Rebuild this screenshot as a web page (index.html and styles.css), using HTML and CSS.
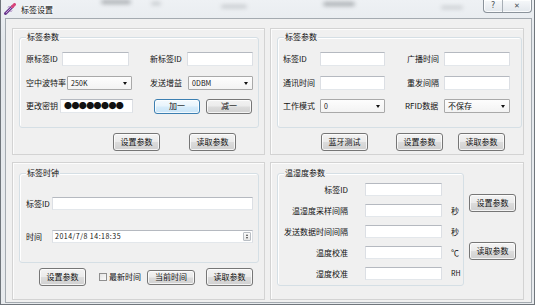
FILE: index.html
```html
<!DOCTYPE html>
<html lang="zh">
<head>
<meta charset="utf-8">
<link rel="stylesheet" href="styles.css">
</head>
<body>
<div class="window">
  <div class="titlebar">
    <span class="blob b1"></span>
    <span class="blob b2"></span>
    <span class="blob b3"></span>
    <span class="blob b4"></span>
    <span class="blob b5"></span>
    <svg class="appicon" width="12" height="12" viewBox="0 0 12 12">
      <path d="M1.5 10.5 L8.5 3.5" stroke="#6a3a8e" stroke-width="3" stroke-linecap="round"/>
      <path d="M2 10 L8 4" stroke="#c89ad8" stroke-width="1"/>
      <path d="M8.5 3.5 L10.5 1.5" stroke="#d8457a" stroke-width="3" stroke-linecap="round"/>
      <path d="M4 4.5 L5.5 3 M6.5 9 L8 7.5" stroke="#9b6bb8" stroke-width="1"/>
    </svg>
    <span class="title">标签设置</span>
    <div class="capbtns">
      <span class="capbtn help">?</span>
      <span class="capbtn close">✕</span>
    </div>
  </div>

  <div class="client">
    <!-- top left -->
    <div class="panel p-top-left">
      <div class="group g-top-left">
        <span class="legend">标签参数</span>
        <div class="row">
          <div class="c1">
            <span class="lbl w36">原标签ID</span><span class="input w67"></span>
          </div>
          <div class="c2">
            <span class="lbl w37">新标签ID</span><span class="input w66"></span>
          </div>
        </div>
        <div class="row r2">
          <div class="c1">
            <span class="lbl w41">空中波特率</span><span class="select w65"><span class="val">250K</span><span class="arrow"></span></span>
          </div>
          <div class="c2">
            <span class="lbl w38">发送增益</span><span class="select w65"><span class="val">0DBM</span><span class="arrow"></span></span>
          </div>
        </div>
        <div class="row r3">
          <div class="c1">
            <span class="lbl w34">更改密钥</span><span class="input pwd w73">●●●●●●●●</span>
          </div>
          <div class="c2 c2-btns">
            <span class="btn focus">加一</span><span class="btn">减一</span>
          </div>
        </div>
      </div>
      <div class="btnrow tl-btns">
        <span class="btn">设置参数</span><span class="btn">读取参数</span>
      </div>
    </div>

    <!-- top right -->
    <div class="panel p-top-right">
      <div class="group g-top-right">
        <span class="legend">标签参数</span>
        <div class="row">
          <span class="lbl w37">标签ID</span><span class="input w65"></span>
          <span class="lbl w37 col2">广播时间</span><span class="input w66"></span>
        </div>
        <div class="row r2">
          <span class="lbl w37">通讯时间</span><span class="input w65"></span>
          <span class="lbl w37 col2">重发间隔</span><span class="input w66"></span>
        </div>
        <div class="row r3">
          <span class="lbl w37">工作模式</span><span class="select w65"><span class="val">0</span><span class="arrow"></span></span>
          <span class="lbl w39 col2b">RFID数据</span><span class="select w66"><span class="val cjk">不保存</span><span class="arrow"></span></span>
        </div>
      </div>
      <div class="btnrow tr-btns">
        <span class="btn">蓝牙测试</span><span class="btn">设置参数</span><span class="btn">读取参数</span>
      </div>
    </div>

    <!-- bottom left -->
    <div class="panel p-bot-left">
      <div class="group g-bot-left">
        <span class="legend">标签时钟</span>
        <div class="row rb1">
          <span class="lbl w26">标签ID</span><span class="input w201 h13"></span>
        </div>
        <div class="row rb2">
          <span class="lbl w26">时间</span>
          <span class="input w201 h13 dt"><span class="val">2014/7/8 14:18:35</span><span class="spin"><span class="up"></span><span class="dn"></span></span></span>
        </div>
      </div>
      <div class="btnrow bl-btns">
        <span class="btn">设置参数</span>
        <span class="check"></span><span class="checklbl">最新时间</span>
        <span class="btn small">当前时间</span>
        <span class="btn">读取参数</span>
      </div>
    </div>

    <!-- bottom right -->
    <div class="panel p-bot-right">
      <div class="group g-bot-right">
        <span class="legend">温湿度参数</span>
        <div class="trow"><span class="tlbl">标签ID</span><span class="input w77 h13"></span><span class="unit"></span></div>
        <div class="trow"><span class="tlbl">温湿度采样间隔</span><span class="input w77 h13"></span><span class="unit">秒</span></div>
        <div class="trow"><span class="tlbl">发送数据时间间隔</span><span class="input w77 h13"></span><span class="unit">秒</span></div>
        <div class="trow"><span class="tlbl">温度校准</span><span class="input w77 h13"></span><span class="unit">℃</span></div>
        <div class="trow"><span class="tlbl">湿度校准</span><span class="input w77 h13"></span><span class="unit lat">RH</span></div>
      </div>
      <div class="btncol">
        <span class="btn">设置参数</span>
        <span class="btn second">读取参数</span>
      </div>
    </div>
  </div>
</div>
</body>
</html>
```

FILE: styles.css
```css
* { box-sizing: border-box; margin: 0; padding: 0; }
html, body { width: 535px; height: 305px; overflow: hidden; }
body {
  font-family: "Noto Sans CJK SC", "Noto Sans", sans-serif;
  font-size: 8px;
  line-height: 1;
  color: #111;
  background: #dfe4e9;
}

.window {
  position: relative;
  width: 535px;
  height: 305px;
  display: flex;
  flex-direction: column;
  background: linear-gradient(#eef1f4, #e4e8ec 40px, #e8ebee);
  border: 1px solid #70767c;
  border-top: none;
}

/* title bar */
.titlebar {
  position: relative;
  height: 18px;
  display: flex;
  align-items: center;
  padding-left: 3px;
  flex-shrink: 0;
}
.appicon { display: block; margin-right: 5px; position: relative; z-index: 1; }
.title {
  font-size: 8px;
  color: #111;
  text-shadow: 0 0 3px #fff, 0 0 5px #fff;
  position: relative;
  z-index: 1;
  margin-top: 1px;
}
.blob {
  position: absolute;
  background: #6c7176;
  filter: blur(2px);
  opacity: .55;
  border-radius: 3px;
}
.b1 { left: 100px; top: 0; width: 30px; height: 4px; }
.b2 { left: 150px; top: 2px; width: 10px; height: 3px; opacity: .35; }
.b3 { left: 220px; top: 5px; width: 26px; height: 3px; opacity: .35; }
.b4 { left: 322px; top: 2px; width: 32px; height: 4px; }
.b5 { left: 440px; top: 6px; width: 22px; height: 3px; opacity: .3; }

.capbtns {
  position: absolute;
  top: 0;
  right: 2px;
  display: flex;
  height: 13px;
  border: 1px solid #8b939b;
  border-top: none;
  border-radius: 0 0 4px 4px;
  background: linear-gradient(#f6f8fa, #e2e7ec);
  box-shadow: inset 0 0 0 1px rgba(255,255,255,.8);
}
.capbtn {
  display: flex;
  align-items: center;
  justify-content: center;
  color: #4a4f55;
  font-family: "DejaVu Sans", sans-serif;
  font-size: 8px;
}
.help { width: 19px; border-right: 1px solid #a7aeb5; }
.close { width: 28px; font-size: 7px; }

/* client */
.client {
  margin: 0 2px 1px 4px;
  height: 285px;
  border: 1px solid #a4aab0;
  background: #f0f0f0;
  padding: 9px 0 0 6px;
  display: grid;
  grid-template-columns: 253px 254px;
  grid-template-rows: 127px 138px;
  column-gap: 5px;
  row-gap: 7px;
}

.panel {
  border: 1px solid #d3d3d3;
  box-shadow: inset 1px 1px 0 #fcfcfc;
  background: #f0f0f0;
}

.group {
  position: relative;
  border: 1px solid #d5dfe5;
  border-radius: 3px;
  box-shadow: inset 1px 1px 0 #fff;
}
.legend {
  position: absolute;
  top: -5px;
  left: 6px;
  padding: 0 1px;
  background: #f0f0f0;
  color: #111;
}

.row { display: flex; align-items: center; height: 14px; }
.r2 { margin-top: 10px; }
.r3 { margin-top: 9px; }

.lbl { display: block; white-space: nowrap; flex-shrink: 0; }
.w26 { width: 26px; }
.w34 { width: 34px; }
.w36 { width: 36px; }
.w37 { width: 37px; }
.w38 { width: 38px; }
.w39 { width: 39px; }
.w41 { width: 41px; }

.input {
  display: block;
  height: 14px;
  background: #fff;
  border: 1px solid;
  border-color: #b5b9c0 #dcdfe4 #e3e7eb #dcdfe4;
  flex-shrink: 0;
}
.h13 { height: 13px; }
.w65 { width: 65px; }
.w66 { width: 66px; }
.w67 { width: 67px; }
.w73 { width: 73px; }
.w77 { width: 77px; }
.w201 { width: 201px; }

.pwd {
  font-size: 8px;
  line-height: 12px;
  padding-left: 3px;
  letter-spacing: -0.6px;
  color: #111;
  overflow: hidden;
  white-space: nowrap;
}

.select {
  display: flex;
  align-items: center;
  justify-content: space-between;
  height: 14px;
  padding: 0 4px 0 3px;
  background: linear-gradient(#fdfdfd, #f3f3f3);
  border: 1px solid #a9a9a9;
  border-radius: 1px;
  flex-shrink: 0;
}
.val {
  font-size: 7px;
  letter-spacing: 0.1px;
  color: #111;
}
.val.cjk { font-size: 8px; letter-spacing: 0; }
.arrow {
  width: 0; height: 0;
  border-left: 2.5px solid transparent;
  border-right: 2.5px solid transparent;
  border-top: 3px solid #111;
}

/* buttons */
.btn {
  display: flex;
  align-items: center;
  justify-content: center;
  width: 47px;
  height: 18px;
  border: 1px solid #767676;
  border-radius: 3px;
  background: linear-gradient(#f3f3f3 0%, #ebebeb 48%, #dcdcdc 52%, #d0d0d0 100%);
  box-shadow: inset 0 0 0 1px rgba(255,255,255,.75);
  color: #111;
  flex-shrink: 0;
}
.btn.focus {
  border-color: #3c7fb1;
  background: linear-gradient(#f4fafe 0%, #e8f4fc 48%, #d7ecfa 52%, #c8e4f8 100%);
}
.btnrow { display: flex; align-items: center; }

/* top-left */
.p-top-left { padding: 8px 5px 0 6px; }
.g-top-left { height: 91px; padding: 14px 0 0 6px; }
.c1 { width: 124px; display: flex; align-items: center; }
.c2 { display: flex; align-items: center; }
.c2-btns { padding-left: 4px; gap: 6px; }
.c2-btns .btn { width: 46px; height: 15px; }
.tl-btns { margin-top: 5px; padding-left: 94px; gap: 29px; }

/* top-right */
.p-top-right { padding: 8px 0 0 6px; }
.g-top-right { width: 245px; height: 91px; padding: 14px 0 0 5px; }
.col2 { margin-left: 22px; }
.col2b { margin-left: 20px; }
.tr-btns { margin-top: 5px; padding-left: 44px; }
.tr-btns .btn:nth-child(2) { margin-left: 28px; }
.tr-btns .btn:nth-child(3) { margin-left: 15px; }

/* bottom-left */
.p-bot-left { padding: 10px 5px 0 6px; }
.g-bot-left { height: 90px; padding: 23px 0 0 6px; }
.rb1, .rb2 { height: 13px; }
.rb2 { margin-top: 20px; }
.dt {
  display: flex;
  align-items: center;
  justify-content: space-between;
  padding: 0 1px 0 2px;
}
.dt .val { letter-spacing: 0.5px; }
.spin {
  width: 8px;
  height: 9px;
  border: 1px solid #b9bec4;
  border-radius: 1px;
  background: linear-gradient(#fafafa, #e6e6e6);
  display: flex;
  flex-direction: column;
  align-items: center;
  justify-content: space-around;
}
.spin .up, .spin .dn {
  width: 0; height: 0;
  border-left: 1.5px solid transparent;
  border-right: 1.5px solid transparent;
}
.spin .up { border-bottom: 2px solid #444; }
.spin .dn { border-top: 2px solid #444; }
.bl-btns { margin-top: 5px; padding-left: 20px; height: 18px; }
.check {
  width: 8px;
  height: 8px;
  margin-left: 13px;
  border: 1px solid #8f8f8f;
  background: linear-gradient(135deg, #e4e4e4, #fbfbfb);
  flex-shrink: 0;
}
.checklbl { margin-left: 2px; white-space: nowrap; }
.btn.small { width: 48px; height: 15px; margin-left: 6px; }
.bl-btns .btn:last-child { margin-left: 11px; }

/* bottom-right */
.p-bot-right { padding: 10px 0 0 6px; display: flex; align-items: flex-start; }
.g-bot-right { width: 187px; height: 113px; padding: 9px 0 0 0; }
.trow { display: flex; align-items: center; height: 13px; }
.trow + .trow { margin-top: 8px; }
.tlbl { width: 70px; text-align: right; white-space: nowrap; margin-right: 17px; }
.unit { margin-left: 9px; white-space: nowrap; }
.unit.lat { font-size: 7px; }
.btncol { display: flex; flex-direction: column; margin-left: 5px; margin-top: 21px; }
.btncol .second { margin-top: 30px; }
```
